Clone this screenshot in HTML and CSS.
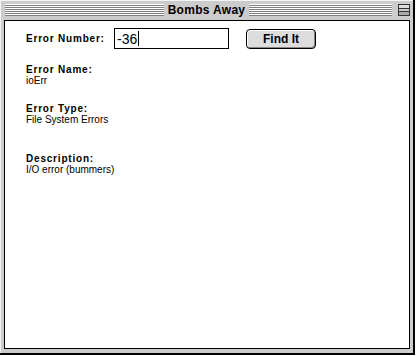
FILE: index.html
```html
<!DOCTYPE html>
<html>
<head>
<meta charset="utf-8">
<title>Bombs Away</title>
<link rel="stylesheet" href="styles.css">
</head>
<body>
<div class="window">
  <div class="titlebar">
    <div class="stripes left"></div>
    <div class="title">Bombs Away</div>
    <div class="right">
      <div class="stripes"></div>
      <svg class="collapse" width="12" height="12" viewBox="0 0 12 12">
        <rect x="0.5" y="0.5" width="11" height="11" fill="#bbb" stroke="#333"/>
        <rect x="1" y="1" width="10" height="3" fill="#ddd"/>
        <rect x="1" y="5" width="10" height="2" fill="#ccc"/>
        <rect x="1" y="8" width="10" height="3" fill="#aaa"/>
        <line x1="1" y1="4.5" x2="11" y2="4.5" stroke="#333"/>
        <line x1="1" y1="7.5" x2="11" y2="7.5" stroke="#333"/>
      </svg>
    </div>
  </div>
  <div class="content">
    <div class="lookup">
      <span class="label label-number">Error Number:</span>
      <div class="textbox"><span>-36</span><span class="caret"></span></div>
      <button class="btn">Find It</button>
    </div>
    <div class="field field-name">
      <div class="label">Error Name:</div>
      <div class="value">ioErr</div>
    </div>
    <div class="field field-type">
      <div class="label">Error Type:</div>
      <div class="value">File System Errors</div>
    </div>
    <div class="field field-desc">
      <div class="label">Description:</div>
      <div class="value">I/O error (bummers)</div>
    </div>
  </div>
</div>
</body>
</html>
```
FILE: styles.css
```css
* { box-sizing: border-box; }
html, body { margin: 0; background: #fff; }

.window {
  width: 415px;
  height: 355px;
  background: #cccccc;
  border-right: 2px solid #000;
  border-bottom: 2px solid #000;
  box-shadow: inset 1px 1px 0 #f4f4f4;
  display: flex;
  flex-direction: column;
}

.titlebar {
  height: 20px;
  flex: none;
  display: grid;
  grid-template-columns: 1fr auto 1fr;
  align-items: center;
}

.stripes {
  height: 12px;
  background: repeating-linear-gradient(to bottom, #ffffff 0 1px, #808080 1px 2px);
}
.stripes.left { margin-left: 5px; }

.title {
  font: bold 12px "Liberation Sans", Arial, sans-serif;
  letter-spacing: 0.3px;
  line-height: 20px;
  padding: 0 4px;
  color: #000;
}

.right {
  display: flex;
  align-items: center;
  padding-right: 3px;
}
.right .stripes { flex: 1; }
.collapse { display: block; margin-left: 6px; flex: none; }

.content {
  flex: 1;
  margin: 0 3px 4px 4px;
  background: #fff;
  border: 1px solid #000;
  padding: 7px 0 0 21px;
  font-family: "Liberation Sans", Arial, sans-serif;
  color: #000;
}

.lookup {
  display: flex;
  align-items: center;
  height: 21px;
}

.label {
  font-weight: bold;
  font-size: 10px;
  letter-spacing: 0.8px;
}
.label-number { width: 88px; }

.textbox {
  width: 115px;
  height: 21px;
  border: 1px solid #000;
  padding-left: 2px;
  display: flex;
  align-items: center;
  font-size: 14px;
}
.caret {
  width: 1px;
  height: 15px;
  background: #000;
  margin-left: 1px;
}

.btn {
  margin-left: 17px;
  width: 70px;
  height: 20px;
  padding: 0;
  border: 1px solid #000;
  border-radius: 4px;
  background: #dddddd;
  box-shadow: inset 1px 1px 0 #fff, inset -1px -1px 0 #888;
  font: bold 12px "Liberation Sans", Arial, sans-serif;
  color: #000;
}

.field { line-height: 11px; }
.value { font-size: 10px; }
.field-name { margin-top: 15px; }
.field-type { margin-top: 17px; }
.field-desc { margin-top: 28px; }
```
